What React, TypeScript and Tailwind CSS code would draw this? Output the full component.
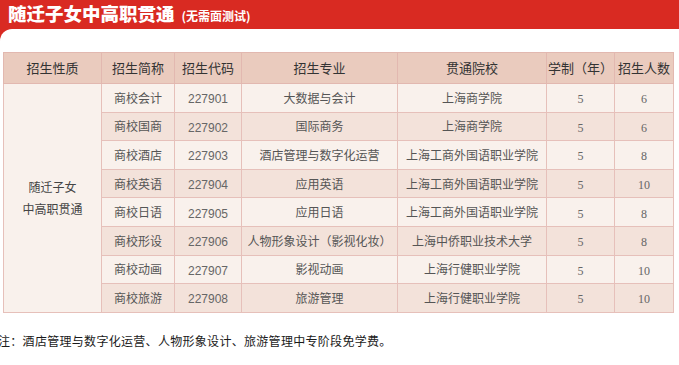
import React from "react";

const rows = [
  ["商校会计", "227901", "大数据与会计", "上海商学院", "5", "6"],
  ["商校国商", "227902", "国际商务", "上海商学院", "5", "6"],
  ["商校酒店", "227903", "酒店管理与数字化运营", "上海工商外国语职业学院", "5", "8"],
  ["商校英语", "227904", "应用英语", "上海工商外国语职业学院", "5", "10"],
  ["商校日语", "227905", "应用日语", "上海工商外国语职业学院", "5", "8"],
  ["商校形设", "227906", "人物形象设计（影视化妆）", "上海中侨职业技术大学", "5", "8"],
  ["商校动画", "227907", "影视动画", "上海行健职业学院", "5", "10"],
  ["商校旅游", "227908", "旅游管理", "上海行健职业学院", "5", "10"],
];

const cjk = "font-['Noto_Sans_CJK_SC','Noto_Sans',sans-serif]";

export default function App() {
  return (
    <div className={`w-[679px] h-[365px] bg-[#d92a22] overflow-hidden flex flex-col ${cjk}`}>
      <div className="h-[29px] shrink-0 flex items-baseline pl-[8px] pt-[2px]">
        <span className="text-[18.5px] leading-[23px] font-black text-white">随迁子女中高职贯通</span>
        <span className="text-[12px] font-bold text-white ml-[7px]">(无需面测试)</span>
      </div>
      <div className="flex-1 bg-white rounded-tl-[12px] pt-[23px]">
        <table className="ml-[3px] w-[670px] border-collapse table-fixed text-[12px] text-[#555]">
          <colgroup>
            <col className="w-[98px]" />
            <col className="w-[73px]" />
            <col className="w-[67px]" />
            <col className="w-[156px]" />
            <col className="w-[149px]" />
            <col className="w-[68px]" />
            <col className="w-[59px]" />
          </colgroup>
          <thead>
            <tr className="h-[31px] bg-[#eacbbe] text-[13px] text-[#333]">
              {["招生性质", "招生简称", "招生代码", "招生专业", "贯通院校", "学制（年）", "招生人数"].map((h) => (
                <th key={h} className="border border-[#e2b8b0] font-normal text-center p-0">
                  {h}
                </th>
              ))}
            </tr>
          </thead>
          <tbody>
            {rows.map((r, i) => (
              <tr key={r[1]} className={`h-[28.6px] ${i % 2 === 0 ? "bg-[#f9f1ec]" : "bg-[#f3e2da]"}`}>
                {i === 0 && (
                  <td rowSpan={8} className="border border-[#e6c0ba] bg-[#f9f1ec] text-center text-[12px] leading-[22px] text-[#444] p-0">
                    随迁子女
                    <br />
                    中高职贯通
                  </td>
                )}
                <td className="border border-[#e6c0ba] text-center p-0">{r[0]}</td>
                <td className="border border-[#e6c0ba] text-center p-0 pt-[3px] font-['Liberation_Sans',sans-serif] text-[12px] text-[#666]">{r[1]}</td>
                <td className="border border-[#e6c0ba] text-center p-0">{r[2]}</td>
                <td className="border border-[#e6c0ba] text-center p-0">{r[3]}</td>
                <td className="border border-[#e6c0ba] text-center p-0 pt-[3px] font-['Liberation_Serif',serif] text-[12px] text-[#666]">{r[4]}</td>
                <td className="border border-[#e6c0ba] text-center p-0 pt-[3px] font-['Liberation_Serif',serif] text-[12px] text-[#666]">{r[5]}</td>
              </tr>
            ))}
          </tbody>
        </table>
        <div className="mt-[20px] ml-[-2px] text-[12px] leading-[16px] tracking-[0.3px] text-[#1a1a1a] whitespace-nowrap">
          注：酒店管理与数字化运营、人物形象设计、旅游管理中专阶段免学费。
        </div>
      </div>
    </div>
  );
}
